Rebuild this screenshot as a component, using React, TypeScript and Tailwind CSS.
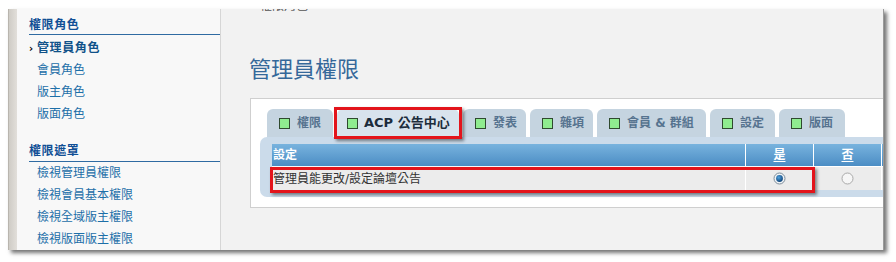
import React from 'react';

const font = "font-['DejaVu_Sans','Noto_Sans_CJK_TC',sans-serif]";

const roles = ['會員角色', '版主角色', '版面角色'];
const masks = ['檢視管理員權限', '檢視會員基本權限', '檢視全域版主權限', '檢視版面版主權限'];

const tabs = [
  { label: '權限', w: 'w-[66px]' },
  { label: 'ACP 公告中心', w: 'w-[122px]', active: true },
  { label: '發表', w: 'w-[63px]' },
  { label: '雜項', w: 'w-[63px]' },
  { label: '會員 & 群組', w: 'w-[109px]' },
  { label: '設定', w: 'w-[65px]' },
  { label: '版面', w: 'w-[66px]' },
];

function Radio({ checked }: { checked?: boolean }) {
  return (
    <svg width="13" height="13" viewBox="0 0 13 13">
      <defs>
        <radialGradient id="dot" cx="40%" cy="35%" r="70%">
          <stop offset="0%" stopColor="#4fa3e0" />
          <stop offset="100%" stopColor="#0d3f73" />
        </radialGradient>
      </defs>
      <circle cx="6.5" cy="6.5" r="5.5" fill={checked ? '#eef2f5' : '#f6f6f6'} stroke={checked ? '#7d8c99' : '#a9a9a9'} />
      {checked && <circle cx="6.5" cy="6.5" r="3.4" fill="url(#dot)" />}
    </svg>
  );
}

export default function App() {
  return (
    <div className={`w-[896px] h-[262px] bg-white pt-[9px] pl-[8px] ${font}`}>
      <div className="w-[876px] h-[241px] flex overflow-hidden shadow-[3px_3px_4px_rgba(0,0,0,0.55)] border-r border-[#9a9a9a]">
        {/* left gray strip */}
        <div className="w-[9px] shrink-0 bg-gradient-to-r from-[#cfccc6] to-[#e2dfda] border-l border-[#b9b5ae]" />

        {/* sidebar */}
        <div className="w-[204px] shrink-0 bg-[#f8f8f8] border-r border-[#d6d6d6] pl-[12px]">
          <div className="mt-[8px] pb-[1px] border-b border-[#2f6ba2] text-[12px] leading-[16px] font-bold tracking-[0.6px] text-[#114f95]">
            權限角色
          </div>
          <div className="mt-[2px]">
            <div className="flex items-center h-[22px] text-[12px] font-bold tracking-[0.6px] text-[#105289]">
              <span className="w-[8px] text-[10px] font-bold text-black">›</span>
              管理員角色
            </div>
            {roles.map((r) => (
              <div key={r} className="h-[22px] pl-[8px] leading-[22px] text-[12px] text-[#1d6fa8]">
                {r}
              </div>
            ))}
          </div>

          <div className="mt-[18px] pb-[2px] border-b border-[#2f6ba2] text-[12px] leading-[16px] font-bold tracking-[0.6px] text-[#114f95]">
            權限遮罩
          </div>
          <div>
            {masks.map((m) => (
              <div key={m} className="h-[22px] pl-[8px] leading-[22px] text-[12px] text-[#1d6fa8]">
                {m}
              </div>
            ))}
          </div>
        </div>

        {/* main */}
        <div className="flex-1 min-w-0 overflow-hidden bg-[#f2f2f2]">
          <div className="h-[4px] overflow-hidden pl-[39px]">
            <div className="-mt-[10px] text-[12px] leading-[14px] text-[#555]">權限角色</div>
          </div>

          <h1 className="mt-[44px] pl-[28px] text-[22px] leading-[26px] font-normal text-[#35689a]">
            管理員權限
          </h1>

          <div className="relative ml-[29px] mt-[15px] w-[720px] bg-white border border-[#cfcfcf] pt-[10px] pb-[10px] pl-[9px]">
            {/* tabs */}
            <div className="flex gap-[4px] ml-[7px] h-[28px]">
              {tabs.map((t) =>
                t.active ? (
                  <div
                    key={t.label}
                    className={`${t.w} h-full flex items-center gap-[6px] pl-[10px] rounded-t-[6px] bg-[#d8e3ed] text-[13px] font-bold text-[#1c2c3c]`}
                  >
                    <span className="w-[11px] h-[11px] bg-[#8fec8f] border border-[#2f4a2f]" />
                    {t.label}
                  </div>
                ) : (
                  <div
                    key={t.label}
                    className={`${t.w} h-full flex items-center gap-[7px] pl-[12px] rounded-t-[6px] bg-[#c5d4e0] text-[12px] font-bold text-[#56738f]`}
                  >
                    <span className="w-[11px] h-[11px] bg-[#8fec8f] border border-[#2f4a2f]" />
                    {t.label}
                  </div>
                )
              )}
            </div>

            {/* settings container */}
            <div className="w-[720px] rounded-[7px] bg-[#cbdbea] pt-[7px] pb-[7px] pl-[12px]">
              <div className="grid grid-cols-[473px_67px_67px_80px] gap-px bg-white w-max">
                <div className="h-[22px] flex items-center pl-[1px] bg-gradient-to-b from-[#78b3de] to-[#4b8dc4] text-[12px] font-bold text-white">
                  設定
                </div>
                <div className="h-[22px] flex items-center justify-center bg-gradient-to-b from-[#78b3de] to-[#4b8dc4] text-[12px] font-bold text-white underline underline-offset-2">
                  是
                </div>
                <div className="h-[22px] flex items-center justify-center bg-gradient-to-b from-[#78b3de] to-[#4b8dc4] text-[12px] font-bold text-white underline underline-offset-2">
                  否
                </div>
                <div className="h-[22px] bg-gradient-to-b from-[#78b3de] to-[#4b8dc4]" />

                <div className="h-[23px] flex items-center pl-[1px] bg-[#ececec] text-[12px] text-[#333]">
                  管理員能更改/設定論壇公告
                </div>
                <div className="h-[23px] flex items-center justify-center bg-[#ececec]">
                  <Radio checked />
                </div>
                <div className="h-[23px] flex items-center justify-center bg-[#ececec]">
                  <Radio />
                </div>
                <div className="h-[23px] bg-[#ececec]" />
              </div>
            </div>

            {/* annotation boxes */}
            <div className="absolute left-[83px] top-[8px] w-[128px] h-[32px] border-[3px] border-[#e3141b] shadow-[2px_2px_3px_rgba(0,0,0,0.45)]" />
            <div className="absolute left-[19px] top-[68px] w-[545px] h-[26px] border-[3px] border-[#e3141b] shadow-[2px_2px_3px_rgba(0,0,0,0.45)]" />
          </div>
        </div>
      </div>
    </div>
  );
}
